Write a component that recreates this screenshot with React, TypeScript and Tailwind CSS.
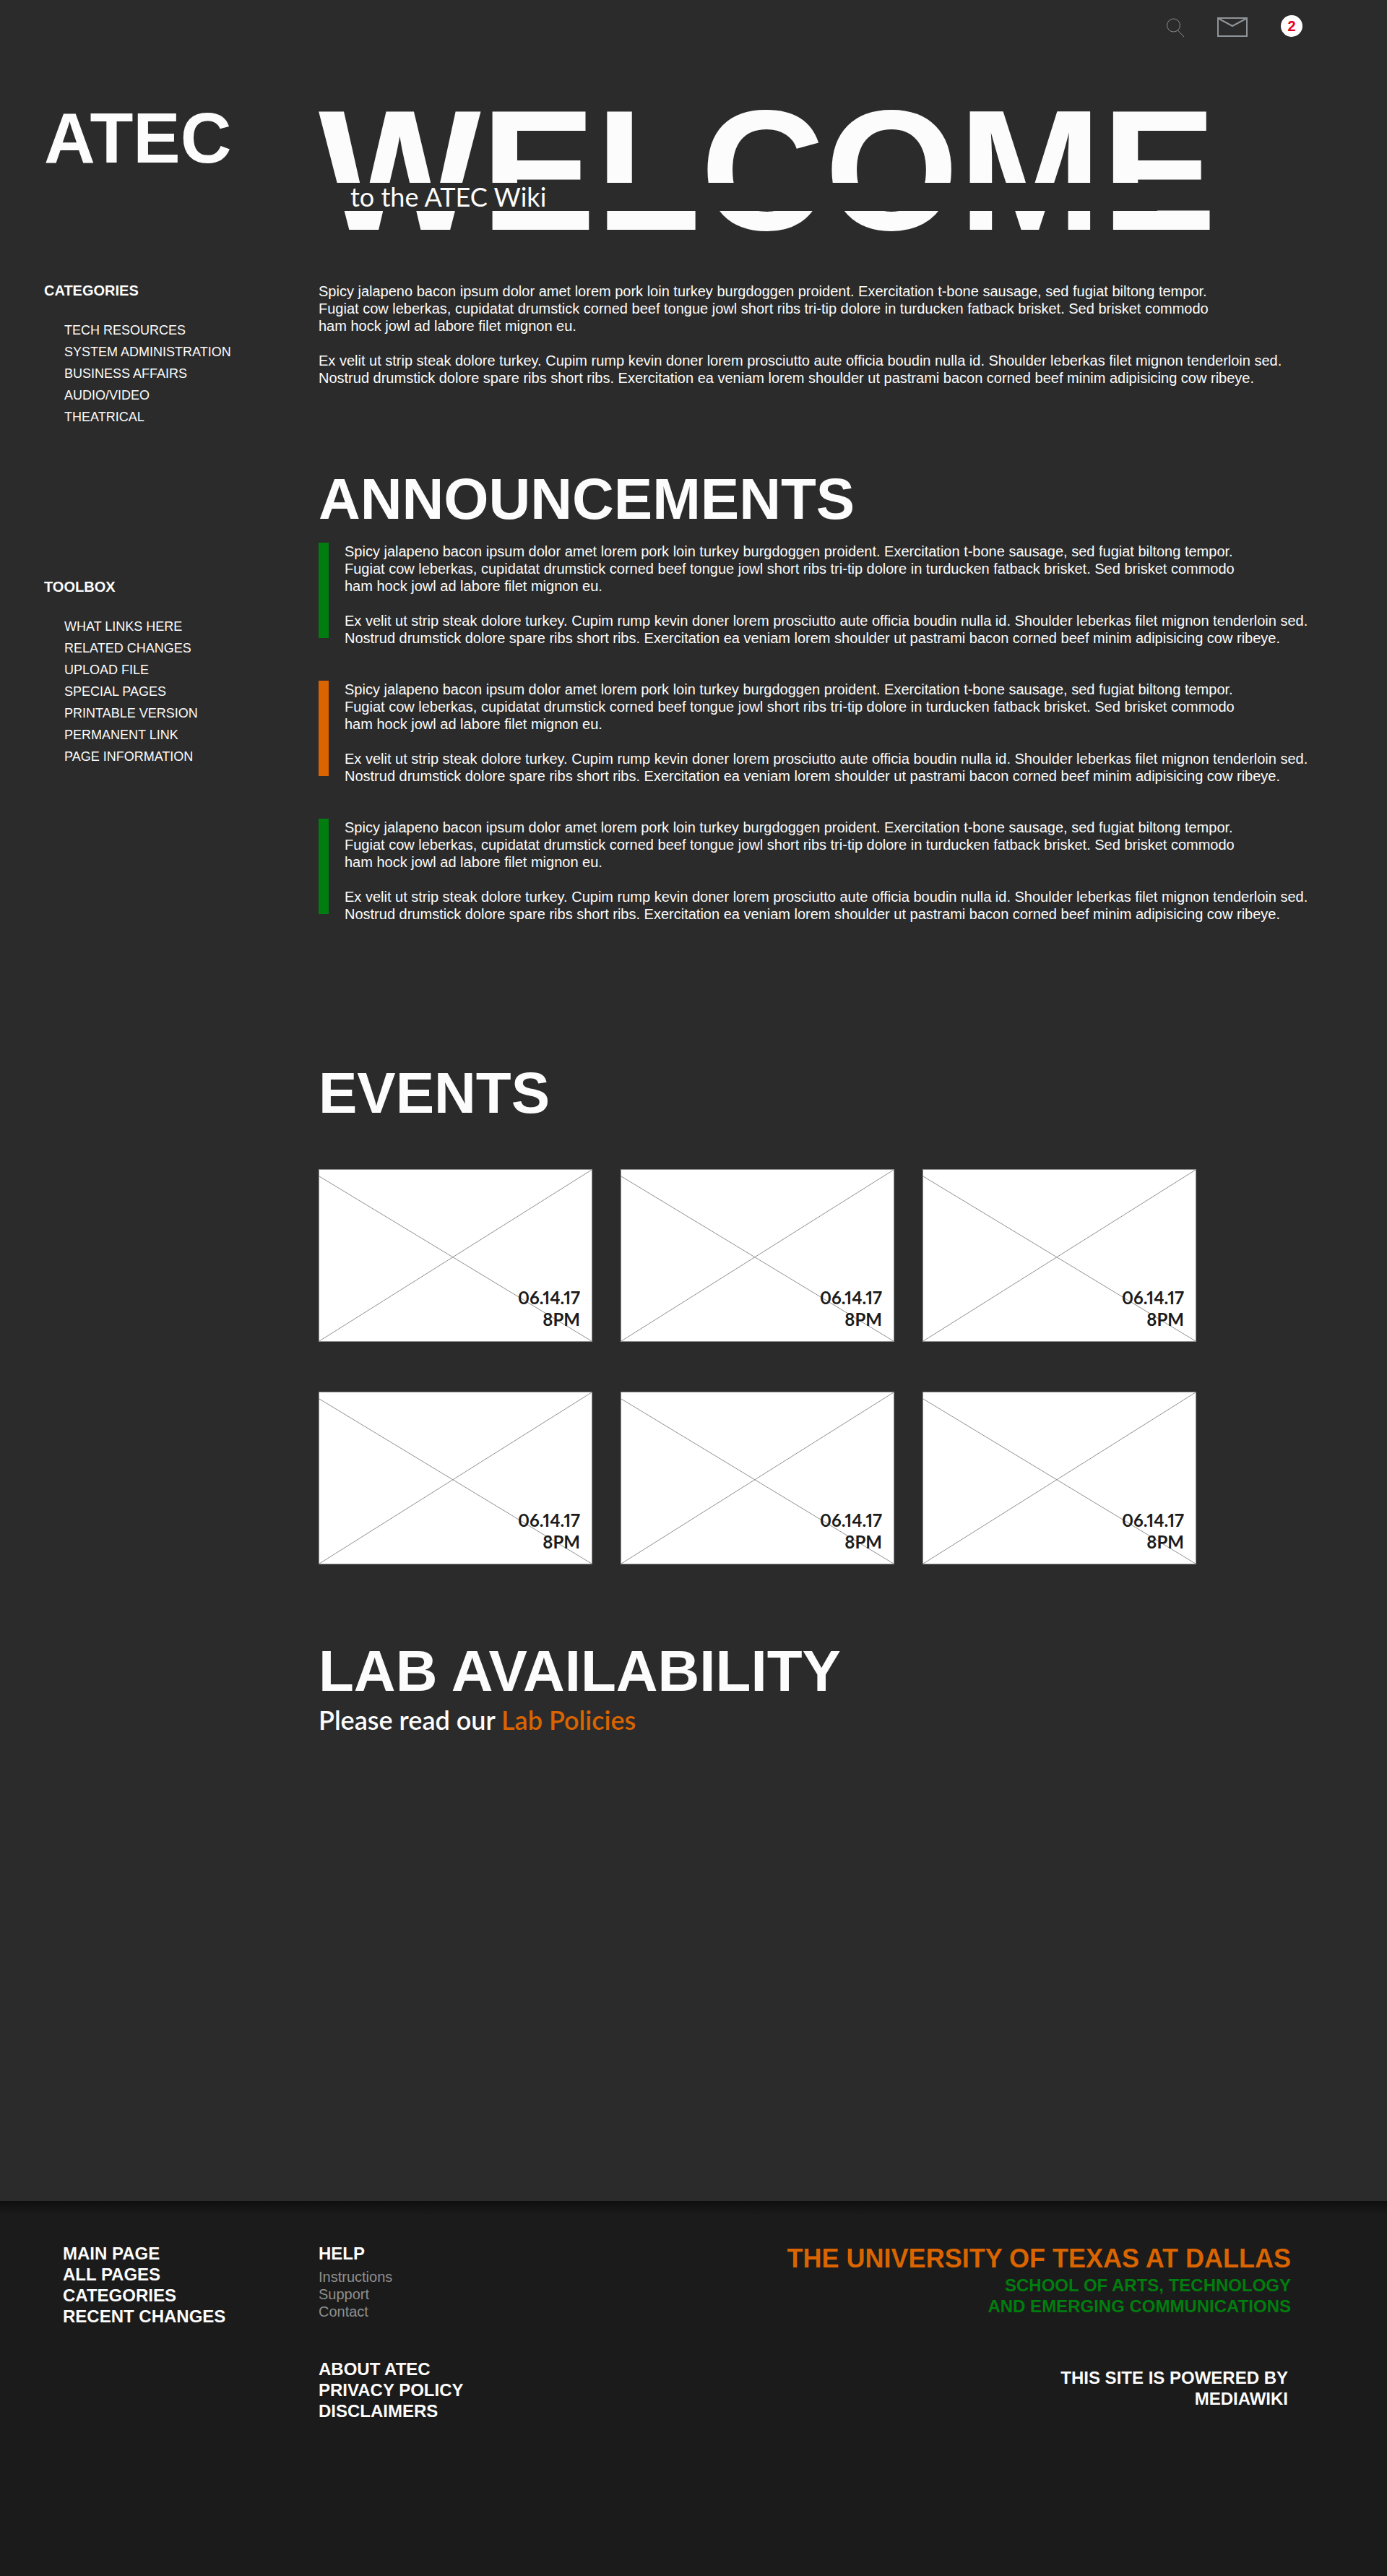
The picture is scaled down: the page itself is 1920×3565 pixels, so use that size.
import React from "react";

const categories = ["TECH RESOURCES", "SYSTEM ADMINISTRATION", "BUSINESS AFFAIRS", "AUDIO/VIDEO", "THEATRICAL"];
const toolbox = [
  "WHAT LINKS HERE",
  "RELATED CHANGES",
  "UPLOAD FILE",
  "SPECIAL PAGES",
  "PRINTABLE VERSION",
  "PERMANENT LINK",
  "PAGE INFORMATION",
];
const announcements = ["bg-[#007d0e]", "bg-[#d96400]", "bg-[#007d0e]"];
const events = [1, 2, 3, 4, 5, 6];

function TopBar() {
  return (
    <header className="flex h-[72px] items-start justify-end pr-[117px] pt-[21px]">
      <button type="button" aria-label="Search" className="mr-[45px] mt-[4px]">
        <svg width="26" height="28" viewBox="0 0 26 28" fill="none" stroke="#8f8f8f" strokeWidth="1">
          <circle cx="10.5" cy="10" r="9" />
          <path d="M16 16.5 L25 26" />
        </svg>
      </button>
      <button type="button" aria-label="Messages" className="mr-[46px] mt-[3px]">
        <svg width="42" height="27" viewBox="0 0 42 27" fill="none" stroke="#8f9499" strokeWidth="2">
          <rect x="1" y="1" width="40" height="25" />
          <path d="M1.5 1.5 L21 12 L40.5 1.5" />
        </svg>
      </button>
      <button
        type="button"
        aria-label="2 notifications"
        className="h-[30px] w-[30px] rounded-full bg-white text-center text-[20px] font-bold leading-[30px] text-[#e8001c]"
      >
        2
      </button>
    </header>
  );
}

function SideNav({ title, items }: { title: string; items: string[] }) {
  return (
    <nav aria-label={title}>
      <h2 className="text-[20px] font-bold leading-[24px]">{title}</h2>
      <ul className="mt-7 pl-7 text-[18px] leading-[30px]">
        {items.map((item) => (
          <li key={item}>
            <a href="#">{item}</a>
          </li>
        ))}
      </ul>
    </nav>
  );
}

function Copy() {
  return (
    <div className="text-[20px] leading-[24px]">
      <p>
        Spicy jalapeno bacon ipsum dolor amet lorem pork loin turkey burgdoggen proident. Exercitation t-bone sausage, sed fugiat biltong tempor.
        <br />
        Fugiat cow leberkas, cupidatat drumstick corned beef tongue jowl short ribs tri-tip dolore in turducken fatback brisket. Sed brisket commodo
        <br />
        ham hock jowl ad labore filet mignon eu.
      </p>
      <p className="mt-6">
        Ex velit ut strip steak dolore turkey. Cupim rump kevin doner lorem prosciutto aute officia boudin nulla id. Shoulder leberkas filet mignon tenderloin sed.
        <br />
        Nostrud drumstick dolore spare ribs short ribs. Exercitation ea veniam lorem shoulder ut pastrami bacon corned beef minim adipisicing cow ribeye.
      </p>
    </div>
  );
}

function SectionTitle({ children }: { children: React.ReactNode }) {
  return <h2 className="text-[80px] font-bold leading-[80px]">{children}</h2>;
}

function EventCard() {
  return (
    <a
      href="#"
      className="relative flex h-[239px] flex-col items-end justify-end border border-[#8f8f8f] bg-white pb-[15px] pr-4 font-['Lato',sans-serif] text-[24px] font-bold proportional-nums leading-[30px] text-[#1b1b1b]"
    >
      <svg
        className="absolute inset-0 h-full w-full"
        viewBox="0 0 377 237"
        preserveAspectRatio="none"
        stroke="#8f8f8f"
        strokeWidth="1"
        aria-hidden="true"
      >
        <path d="M0 9 L377 237 M377 0 L0 237" />
      </svg>
      <span className="relative">06.14.17</span>
      <span className="relative">8PM</span>
    </a>
  );
}

function LinkList({ items }: { items: string[] }) {
  return (
    <ul>
      {items.map((item) => (
        <li key={item}>
          <a href="#">{item}</a>
        </li>
      ))}
    </ul>
  );
}

export default function App() {
  return (
    <div className="flex min-h-screen flex-col bg-[#2b2b2b] font-['Liberation_Sans',Arial,sans-serif] text-[#fcfcfc]">
      <TopBar />
      <div className="flex pb-[644px]">
        <aside className="w-[441px] shrink-0 pl-[61px] pt-[69px]">
          <a href="#" className="block text-[98px] font-bold leading-[100px]">
            ATEC
          </a>
          <div className="mt-[149px] flex flex-col gap-52">
            <SideNav title="CATEGORIES" items={categories} />
            <SideNav title="TOOLBOX" items={toolbox} />
          </div>
        </aside>

        <main className="min-w-0 flex-1 pt-11">
          <div className="relative">
            <h1 className="text-[238px] font-bold leading-[240px]">WELCOME</h1>
            <p className="absolute left-0 top-[137px] h-[39px] w-[1161px] bg-[#2b2b2b] pl-11 font-['Lato',sans-serif] text-[36px] leading-[39px]">
              to the ATEC Wiki
            </p>
          </div>

          <section className="mt-[35px]">
            <Copy />
          </section>

          <section className="mt-[116px]">
            <SectionTitle>ANNOUNCEMENTS</SectionTitle>
            <div className="mt-5 flex flex-col gap-[47px]">
              {announcements.map((color, i) => (
                <article key={i} className="flex gap-[22px]">
                  <div className={`h-[132px] w-[14px] shrink-0 ${color}`} />
                  <Copy />
                </article>
              ))}
            </div>
          </section>

          <section className="mt-[196px]">
            <SectionTitle>EVENTS</SectionTitle>
            <div className="mt-[65px] grid max-w-[1215px] grid-cols-3 gap-x-[39px] gap-y-[69px]">
              {events.map((id) => (
                <EventCard key={id} />
              ))}
            </div>
          </section>

          <section className="mt-[108px]">
            <SectionTitle>LAB AVAILABILITY</SectionTitle>
            <p className="mt-[5px] font-['Lato',sans-serif] text-[36px] font-semibold leading-[44px]">
              Please read our{" "}
              <a href="#" className="text-[#d96400]">
                Lab Policies
              </a>
            </p>
          </section>
        </main>
      </div>

      <footer className="flex-1 bg-[#1b1b1b] text-[24px] font-bold leading-[29px]">
        <div className="h-5 bg-linear-to-b from-[#0f0f0f] to-[#1b1b1b]" />
        <div className="flex pb-52 pl-[87px] pr-[133px] pt-[38px]">
          <div className="w-[354px] shrink-0">
            <LinkList items={["MAIN PAGE", "ALL PAGES", "CATEGORIES", "RECENT CHANGES"]} />
          </div>
          <div>
            <h2>HELP</h2>
            <div className="mt-[6px] text-[20px] font-normal leading-[24px] text-[#8f8f8f]">
              <LinkList items={["Instructions", "Support", "Contact"]} />
            </div>
            <div className="mt-[53px]">
              <LinkList items={["ABOUT ATEC", "PRIVACY POLICY", "DISCLAIMERS"]} />
            </div>
          </div>
          <div className="ml-auto text-right">
            <p className="text-[36px] leading-[44px] text-[#d96400]">THE UNIVERSITY OF TEXAS AT DALLAS</p>
            <p className="text-[#007d0e]">
              SCHOOL OF ARTS, TECHNOLOGY
              <br />
              AND EMERGING COMMUNICATIONS
            </p>
            <p className="mt-[70px] pr-1">
              THIS SITE IS POWERED BY
              <br />
              <a href="#">MEDIAWIKI</a>
            </p>
          </div>
        </div>
      </footer>
    </div>
  );
}
